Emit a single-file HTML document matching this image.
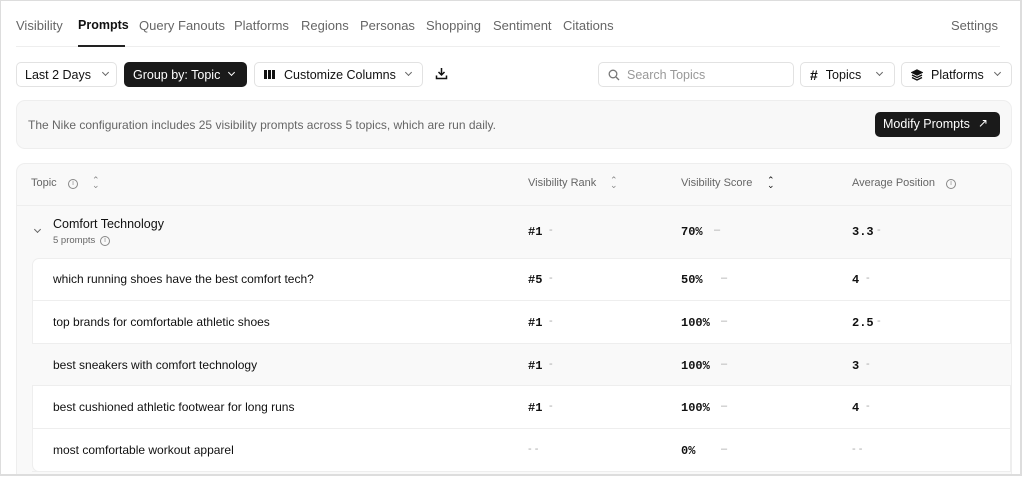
<!DOCTYPE html>
<html style="width:1024px;height:477px;overflow:hidden"><head><meta charset="utf-8"><style>
*{box-sizing:border-box;margin:0;padding:0}
body{width:1024px;height:477px;overflow:hidden;background:#fff;font-family:"Liberation Sans",sans-serif;color:#111;position:relative}
.frame{position:absolute;left:0;top:0;width:1022px;height:476px;border:1px solid #ddd;border-right:2px solid #ddd;border-bottom:2px solid #ddd;z-index:5;pointer-events:none}
.abs{position:absolute}
.tab{position:absolute;top:18px;font-size:13px;color:#666}
.btn{position:absolute;top:62px;height:25px;border:1px solid #e2e2e2;border-radius:5px;background:#fff;font-size:12.5px;display:flex;align-items:center;padding-left:8px;color:#111}
.chev{position:absolute;width:5px;height:5px;border-right:1.2px solid #666;border-bottom:1.2px solid #666;transform:rotate(45deg)}
.mono{font-family:"Liberation Mono",monospace;font-size:12px;font-weight:bold;position:absolute}
.dash{position:absolute;color:#aaa;font-size:11px}
.hd{position:absolute;top:177px;font-size:11px;color:#666}
.row{position:absolute;left:32px;width:979px;border-bottom:1px solid #eee}
.rt{position:absolute;left:21px;font-size:12px;color:#111}
.info{position:absolute;width:10px;height:10px;border:1px solid #888;border-radius:50%;font-size:7px;color:#888;text-align:center;line-height:8px}
.sort{position:absolute;font-size:9px;color:#888;line-height:5px}
</style></head><body>
<div class="frame"></div>
<div class="tab" style="left:16px">Visibility</div>
<div class="tab" style="left:78px;color:#111;font-weight:bold;font-size:12.5px">Prompts</div>
<div class="tab" style="left:139px">Query Fanouts</div>
<div class="tab" style="left:234px">Platforms</div>
<div class="tab" style="left:301px">Regions</div>
<div class="tab" style="left:360px">Personas</div>
<div class="tab" style="left:426px">Shopping</div>
<div class="tab" style="left:493px">Sentiment</div>
<div class="tab" style="left:563px">Citations</div>
<div class="tab" style="left:951px">Settings</div>
<div class="abs" style="left:16px;top:46px;width:984px;height:1px;background:#eee"></div>
<div class="abs" style="left:78px;top:45px;width:47px;height:2px;background:#222"></div>

<div class="btn" style="left:16px;width:101px">Last 2 Days<span class="chev" style="left:86px;top:7px"></span></div>
<div class="btn" style="left:124px;width:123px;background:#1a1a1a;border-color:#1a1a1a;color:#fff">Group by: Topic<span class="chev" style="left:104px;top:7px;border-color:#fff"></span></div>
<div class="btn" style="left:254px;width:169px;padding-left:9px"><span style="display:inline-block;width:11px;height:9px;border-left:3px solid #111;border-right:3px solid #111;position:relative;margin-right:9px"><span style="position:absolute;left:1px;top:0;width:3px;height:9px;background:#111"></span></span>Customize Columns<span class="chev" style="left:151px;top:7px"></span></div>
<svg class="abs" style="left:435px;top:67px" width="13" height="13" viewBox="0 0 13 13" fill="none" stroke="#111" stroke-width="1.5"><path d="M6.5 1v7M3.5 5l3 3 3-3M1.5 8.5v3h10v-3"/></svg>

<div class="btn" style="left:598px;width:196px;color:#999;padding-left:28px"><svg class="abs" style="left:9px;top:6px" width="12" height="12" viewBox="0 0 12 12" fill="none" stroke="#777" stroke-width="1.3"><circle cx="5" cy="5" r="3.8"/><path d="M8 8l3 3"/></svg>Search Topics</div>
<div class="btn" style="left:800px;width:95px;padding-left:9px"><b style="font-size:14px;margin-right:8px">#</b>Topics<span class="chev" style="left:76px;top:7px"></span></div>
<div class="btn" style="left:901px;width:111px;padding-left:9px"><svg width="12" height="12" viewBox="0 0 12 12" style="margin-right:8px" fill="none" stroke="#111" stroke-width="1.4"><path d="M6 1L1 3.5 6 6l5-2.5z" fill="#111"/><path d="M1 6l5 2.5L11 6M1 8.5L6 11l5-2.5"/></svg>Platforms<span class="chev" style="left:93px;top:7px"></span></div>

<div class="abs" style="left:16px;top:100px;width:996px;height:49px;background:#f8f8f8;border:1px solid #eee;border-radius:9px"></div>
<div class="abs" style="left:28px;top:118px;font-size:12px;color:#666">The Nike configuration includes 25 visibility prompts across 5 topics, which are run daily.</div>
<div class="abs" style="left:875px;top:112px;width:125px;height:25px;background:#1a1a1a;border-radius:5px;color:#fff;font-size:12.5px;padding:5px 0 0 8px">Modify Prompts <span style="position:absolute;left:103px;top:4px;font-size:12px">↗</span></div>

<div class="abs" style="left:16px;top:163px;width:996px;height:312px;border:1px solid #eee;border-bottom:none;border-radius:9px 9px 0 0;background:#f9f9f9"></div>
<div class="abs" style="left:17px;top:205px;width:994px;height:1px;background:#eee"></div>
<div class="hd" style="left:31px">Topic</div><div class="info" style="left:68px;top:179px">i</div><div class="sort" style="left:92px;top:178px">⌃<br>⌄</div>
<div class="hd" style="left:528px">Visibility Rank</div><div class="sort" style="left:610px;top:178px">⌃<br>⌄</div>
<div class="hd" style="left:681px">Visibility Score</div><div class="sort" style="left:767px;top:178px;color:#111">⌃<br>⌄</div>
<div class="hd" style="left:852px">Average Position</div><div class="info" style="left:946px;top:179px">i</div>

<span class="chev" style="left:35px;top:227px"></span>
<div class="abs" style="left:53px;top:217px;font-size:12.5px">Comfort Technology</div>
<div class="abs" style="left:53px;top:235px;font-size:9.5px;color:#666">5 prompts</div><div class="info" style="left:100px;top:236px">i</div>
<div class="mono" style="left:528px;top:225px">#1</div><div class="dash" style="left:549px;top:224px">-</div>
<div class="mono" style="left:681px;top:225px">70%</div><div class="dash" style="left:714px;top:224px">–</div>
<div class="mono" style="left:852px;top:225px">3.3</div><div class="dash" style="left:877px;top:224px">-</div>

<div class="abs" style="left:32px;top:258px;width:979px;height:214px;background:#fff;border:1px solid #eee;border-radius:7px 0 0 7px"></div>
<div class="row" style="top:258px;height:43px"><div class="rt" style="top:14px">which running shoes have the best comfort tech?</div></div>
<div class="row" style="top:301px;height:43px"><div class="rt" style="top:14px">top brands for comfortable athletic shoes</div></div>
<div class="row" style="top:344px;height:42px;background:#f9f9f9"><div class="rt" style="top:14px">best sneakers with comfort technology</div></div>
<div class="row" style="top:386px;height:43px"><div class="rt" style="top:14px">best cushioned athletic footwear for long runs</div></div>
<div class="row" style="top:429px;height:43px"><div class="rt" style="top:14px">most comfortable workout apparel</div></div>

<div class="mono" style="left:528px;top:273px">#5</div><div class="dash" style="left:549px;top:272px">-</div>
<div class="mono" style="left:681px;top:273px">50%</div><div class="dash" style="left:721px;top:272px">–</div>
<div class="mono" style="left:852px;top:273px">4</div><div class="dash" style="left:866px;top:272px">-</div>

<div class="mono" style="left:528px;top:316px">#1</div><div class="dash" style="left:549px;top:315px">-</div>
<div class="mono" style="left:681px;top:316px">100%</div><div class="dash" style="left:721px;top:315px">–</div>
<div class="mono" style="left:852px;top:316px">2.5</div><div class="dash" style="left:877px;top:315px">-</div>

<div class="mono" style="left:528px;top:359px">#1</div><div class="dash" style="left:549px;top:358px">-</div>
<div class="mono" style="left:681px;top:359px">100%</div><div class="dash" style="left:721px;top:358px">–</div>
<div class="mono" style="left:852px;top:359px">3</div><div class="dash" style="left:866px;top:358px">-</div>

<div class="mono" style="left:528px;top:401px">#1</div><div class="dash" style="left:549px;top:400px">-</div>
<div class="mono" style="left:681px;top:401px">100%</div><div class="dash" style="left:721px;top:400px">–</div>
<div class="mono" style="left:852px;top:401px">4</div><div class="dash" style="left:866px;top:400px">-</div>

<div class="dash" style="left:528px;top:443px">- -</div>
<div class="mono" style="left:681px;top:444px">0%</div><div class="dash" style="left:721px;top:443px">–</div>
<div class="dash" style="left:852px;top:443px">- -</div>
</body></html>
